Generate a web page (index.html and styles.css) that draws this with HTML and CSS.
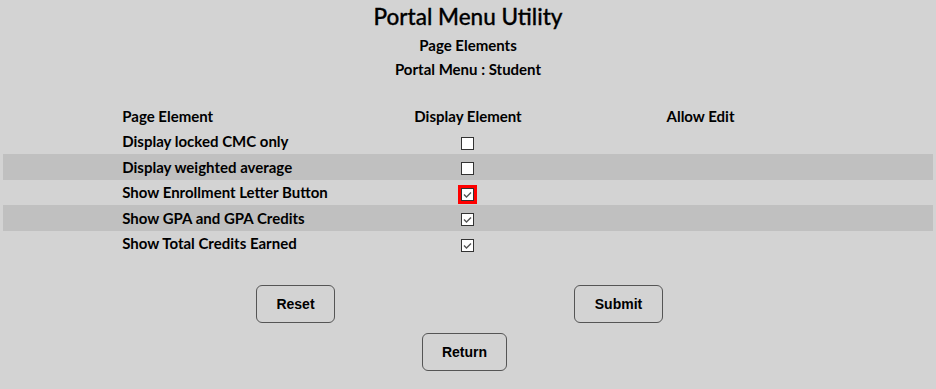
FILE: index.html
```html
<!DOCTYPE html>
<html lang="en">
<head>
  <meta charset="UTF-8" />
  <title>Portal Menu Utility</title>
  <link rel="stylesheet" href="styles.css">
</head>
<body>
  <div class="page-head">
    <h1 class="page-title">Portal Menu Utility</h1>
    <div class="sub-title">Page Elements</div>
    <div class="sub-title">Portal Menu : Student</div>
  </div>

  <table class="elements">
    <colgroup>
      <col class="col-pad" />
      <col class="col-main" />
      <col class="col-main" />
      <col class="col-main" />
      <col class="col-pad" />
    </colgroup>
    <thead>
      <tr>
        <th></th>
        <th class="left">Page Element</th>
        <th>Display Element</th>
        <th>Allow Edit</th>
        <th></th>
      </tr>
    </thead>
    <tbody>
      <tr>
        <td></td>
        <td class="left">Display locked CMC only</td>
        <td><span class="box"></span></td>
        <td></td>
        <td></td>
      </tr>
      <tr class="alt">
        <td></td>
        <td class="left">Display weighted average</td>
        <td><span class="box"></span></td>
        <td></td>
        <td></td>
      </tr>
      <tr>
        <td></td>
        <td class="left">Show Enrollment Letter Button</td>
        <td><span class="box focus"><svg viewBox="0 0 11 11" width="11" height="11"><path d="M2 5.5 L4.5 8 L9 3.5" /></svg></span></td>
        <td></td>
        <td></td>
      </tr>
      <tr class="alt">
        <td></td>
        <td class="left">Show GPA and GPA Credits</td>
        <td><span class="box"><svg viewBox="0 0 11 11" width="11" height="11"><path d="M2 5.5 L4.5 8 L9 3.5" /></svg></span></td>
        <td></td>
        <td></td>
      </tr>
      <tr>
        <td></td>
        <td class="left">Show Total Credits Earned</td>
        <td><span class="box"><svg viewBox="0 0 11 11" width="11" height="11"><path d="M2 5.5 L4.5 8 L9 3.5" /></svg></span></td>
        <td></td>
        <td></td>
      </tr>
    </tbody>
  </table>

  <div class="actions">
    <div class="btn-row">
      <button class="btn btn-reset">Reset</button>
      <button class="btn btn-submit">Submit</button>
    </div>
    <button class="btn btn-return">Return</button>
  </div>
</body>
</html>
```

FILE: styles.css
```css
* { box-sizing: border-box; }
body {
  margin: 0;
  padding: 3px;
  background: #d3d3d3;
  color: #000;
  font-family: "Lato", "Noto Sans", sans-serif;
}
.page-head { text-align: center; }
.page-title {
  margin: 0 0 2px 0;
  font-size: 22.5px;
  font-weight: 500;
  line-height: 28px;
  -webkit-text-stroke: 0.3px #000; /* a touch heavier, like the original */
}
.sub-title {
  font-size: 15px;
  font-weight: 700;
  line-height: 24px;
}
.elements {
  width: 100%;
  margin-top: 22px;
  border-collapse: collapse;
  table-layout: fixed;
  font-size: 15px;
  font-weight: 700;
}
.col-pad { width: 12.5%; }
.col-main { width: 25%; }
.elements th,
.elements td {
  height: 25.5px;
  padding: 0 3px;
  text-align: center;
  vertical-align: middle;
}
.elements .left { text-align: left; }
.elements tr.alt { background: #c0c0c0; }
.box {
  display: inline-block;
  width: 13px;
  height: 13px;
  margin-right: 2px;
  border: 1px solid #333;
  background: #fff;
  vertical-align: middle;
}
.box svg {
  display: block;
  fill: none;
  stroke: #555;
  stroke-width: 1.4;
}
.box.focus {
  outline: 3px solid #f00;
  outline-offset: 0;
}
.actions {
  display: flex;
  flex-direction: column;
  align-items: center;
  gap: 10px;
  margin-top: 29px;
}
.btn-row {
  display: flex;
  gap: 239px;
  padding-right: 17px;
}
.btn {
  height: 38px;
  border: 1px solid #555;
  border-radius: 6px;
  background: transparent;
  font-family: "Liberation Sans", Arial, sans-serif;
  font-size: 14px;
  font-weight: 700;
  color: #000;
}
.btn-reset { width: 79px; }
.btn-submit { width: 89px; }
.btn-return { width: 85px; margin-right: 7px; }
```
